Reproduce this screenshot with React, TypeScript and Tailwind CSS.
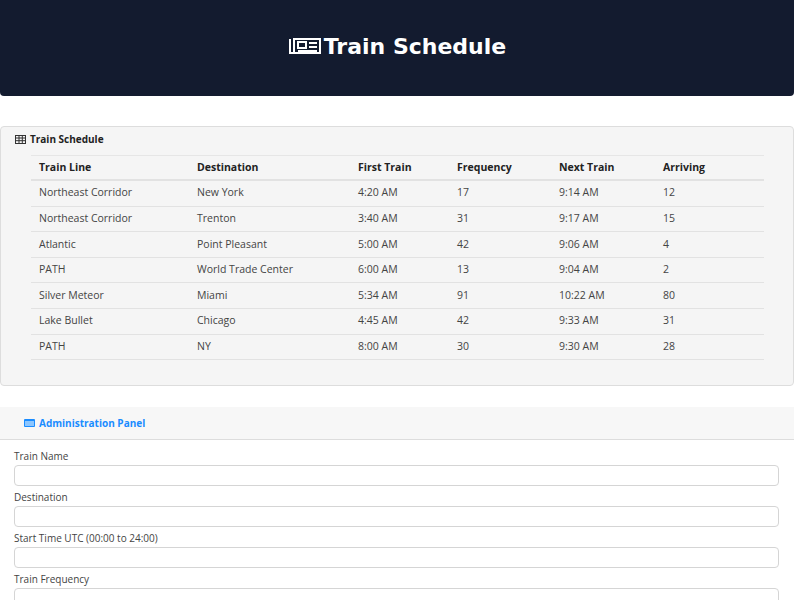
const rows = [
  ["Northeast Corridor", "New York", "4:20 AM", "17", "9:14 AM", "12"],
  ["Northeast Corridor", "Trenton", "3:40 AM", "31", "9:17 AM", "15"],
  ["Atlantic", "Point Pleasant", "5:00 AM", "42", "9:06 AM", "4"],
  ["PATH", "World Trade Center", "6:00 AM", "13", "9:04 AM", "2"],
  ["Silver Meteor", "Miami", "5:34 AM", "91", "10:22 AM", "80"],
  ["Lake Bullet", "Chicago", "4:45 AM", "42", "9:33 AM", "31"],
  ["PATH", "NY", "8:00 AM", "30", "9:30 AM", "28"],
];
const cols = ["w-[158px]", "w-[161px]", "w-[99px]", "w-[102px]", "w-[104px]", "flex-1"];
const heads = ["Train Line", "Destination", "First Train", "Frequency", "Next Train", "Arriving"];
const fields = ["Train Name", "Destination", "Start Time UTC (00:00 to 24:00)", "Train Frequency"];

export default function App() {
  return (
    <div className="w-[794px] h-[600px] overflow-hidden bg-white text-[#333]" style={{ fontFamily: '"Open Sans", sans-serif' }}>
      <header className="h-[96px] bg-[#131b2f] rounded-b-sm flex items-center justify-center gap-[2px] pb-[4px] text-white">
        <svg width="34" height="20" viewBox="0 0 34 20" fill="none" stroke="white" strokeWidth="2">
          <path d="M2 3v14h30V3H6v14" />
          <rect x="10" y="6" width="8" height="6" />
          <path d="M21 7h8M21 11h8M10 15h19" />
        </svg>
        <h1 className="text-[22px] font-bold" style={{ fontFamily: '"DejaVu Sans", sans-serif' }}>Train Schedule</h1>
      </header>
      <section className="mt-[30px] h-[260px] bg-[#f5f5f5] border border-[#ddd] rounded-sm">
        <div className="h-[28px] flex items-center gap-1 pl-[14px] pb-[4px] text-[10px] font-bold text-[#222]">
          <svg width="11" height="9" viewBox="0 0 11 9" fill="none" stroke="#333" strokeWidth="1">
            <rect x="0.5" y="0.5" width="10" height="8" /><path d="M0.5 3h10M0.5 5.7h10M4 0.5v8M7.3 0.5v8" />
          </svg>
          Train Schedule
        </div>
        <div className="ml-[30px] w-[733px] text-[10.5px]">
          <div className="flex items-center h-[26px] border-t border-b-2 border-[#e2e2e2] pl-2 font-bold text-[#222] [border-top-color:#e6e6e6]">
            {heads.map((h, i) => <div key={h} className={cols[i]}>{h}</div>)}
          </div>
          {rows.map((r, ri) => (
            <div key={ri} className="flex items-center h-[25.6px] border-b border-[#e2e2e2] pl-2 text-[#444]">
              {r.map((c, i) => <div key={i} className={cols[i]}>{c}</div>)}
            </div>
          ))}
        </div>
      </section>
      <section className="mt-[21px]">
        <div className="h-[33px] bg-[#f7f7f7] border-b border-[#ddd] flex items-center gap-1 pl-[24px] text-[10px] font-bold text-[#1a8cff]">
          <svg width="11" height="8" viewBox="0 0 11 8"><rect width="11" height="8" rx="1" fill="#1a8cff" /><rect x="1" y="2" width="9" height="5" fill="#8cc6ff" /></svg>
          Administration Panel
        </div>
        <div className="px-[14px] pt-[10px] flex flex-col gap-[5px]">
          {fields.map(f => (
            <div key={f}>
              <div className="text-[10px] text-[#444] mb-[2px] leading-[13px]">{f}</div>
              <div className="h-[21px] w-[765px] border border-[#d5d5d5] rounded bg-white" />
            </div>
          ))}
        </div>
      </section>
    </div>
  );
}
